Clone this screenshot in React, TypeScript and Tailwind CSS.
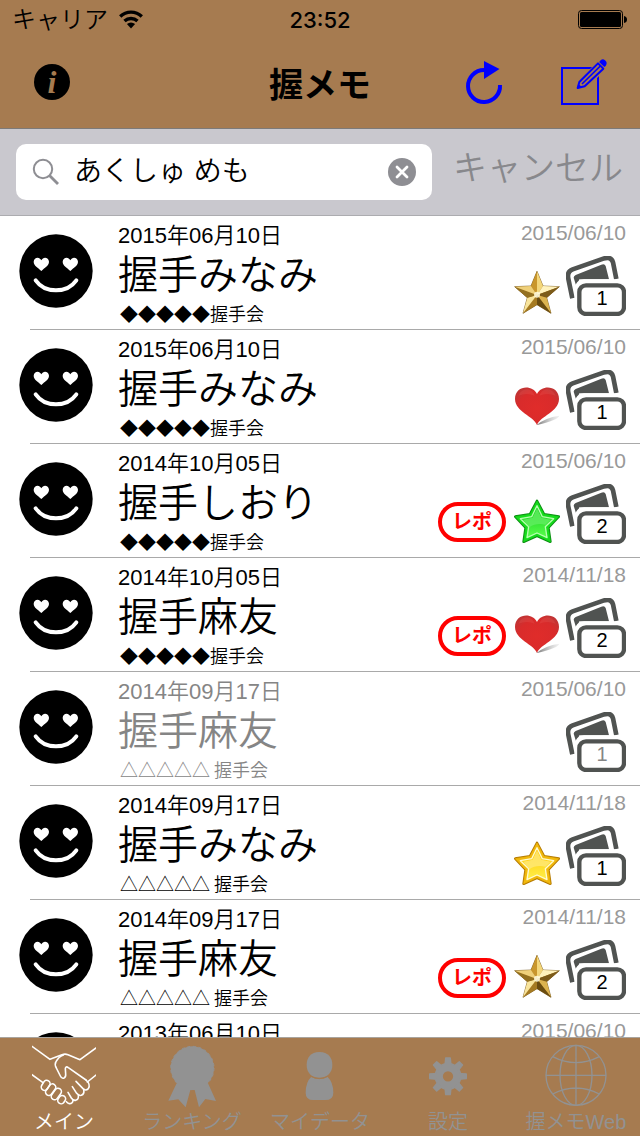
import React from 'react';

type Mark = 'gold' | 'heart' | 'green' | 'yellow';

interface Memo {
  date: string;
  name?: string;
  venue?: string;
  updated: string;
  count?: number;
  mark?: Mark;
  report?: boolean;
  muted?: boolean;
}

const memos: Memo[] = [
  { date: '2015年06月10日', name: '握手みなみ', venue: '◆◆◆◆◆握手会', updated: '2015/06/10', count: 1, mark: 'gold' },
  { date: '2015年06月10日', name: '握手みなみ', venue: '◆◆◆◆◆握手会', updated: '2015/06/10', count: 1, mark: 'heart' },
  { date: '2014年10月05日', name: '握手しおり', venue: '◆◆◆◆◆握手会', updated: '2015/06/10', count: 2, mark: 'green', report: true },
  { date: '2014年10月05日', name: '握手麻友', venue: '◆◆◆◆◆握手会', updated: '2014/11/18', count: 2, mark: 'heart', report: true },
  { date: '2014年09月17日', name: '握手麻友', venue: '△△△△△ 握手会', updated: '2015/06/10', count: 1, muted: true },
  { date: '2014年09月17日', name: '握手みなみ', venue: '△△△△△ 握手会', updated: '2014/11/18', count: 1, mark: 'yellow' },
  { date: '2014年09月17日', name: '握手麻友', venue: '△△△△△ 握手会', updated: '2014/11/18', count: 2, mark: 'gold', report: true },
  { date: '2013年06月10日', updated: '2015/06/10' },
];

/* ---------- Icons ---------- */

const WifiIcon = () => (
  <svg width="26" height="20" viewBox="0 0 26 20" fill="none" stroke="#000" strokeWidth="3.4" aria-hidden="true">
    <path d="M2.2 6.4A15.8 15.8 0 0 1 23.8 6.4M6.5 11A9.6 9.6 0 0 1 19.5 11" />
    <path d="M13 18.5 8.9 14.1A6 6 0 0 1 17.1 14.1Z" fill="#000" stroke="none" />
  </svg>
);

const BatteryIcon = () => (
  <svg width="50" height="20" viewBox="0 0 50 20" aria-hidden="true">
    <rect x="0.5" y="0.5" width="44" height="18" rx="3" fill="none" stroke="#000" />
    <rect x="2" y="2" width="41" height="15" rx="1.5" />
    <path d="M46 6q3 .5 3 3.5t-3 3.5z" />
  </svg>
);

const ReloadIcon = () => (
  <svg width="40" height="46" viewBox="464 59 40 46" aria-hidden="true">
    <path d="M484 70A16 16 0 1 0 500 85" fill="none" stroke="#00f" strokeWidth="4" />
    <path d="M484 61 499.500 69 484 79z" fill="#00f" />
  </svg>
);

const ComposeIcon = () => (
  <svg width="48" height="48" viewBox="723 174 144 144" fill="none" stroke="#00f" aria-hidden="true">
    <path d="M729 204H837V312H729z" strokeWidth="6" />
    <path d="M772 268 784 238 852 172 872 192 804 262z" fill="#a67b50" stroke="#a67b50" strokeWidth="4" />
    <path d="M776 264 781 246 837 190 853 206 797 259z" strokeWidth="6" strokeLinejoin="round" />
    <path d="M789 252 844 198" strokeWidth="5" />
    <path d="M774 266 778 251 789 262z" fill="#00f" stroke="none" />
    <path d="M842 184Q850 174 858 181 867 188 860 198L856 201 841 187z" fill="#00f" stroke="none" />
  </svg>
);

const FaceIcon = () => (
  <svg width="74" height="74" viewBox="57 52 222 222" className="shrink-0" aria-hidden="true">
    <circle cx="168" cy="163" r="110" />
    <path
      fill="#fff"
      d="M124 163C115 153 101 148 101 135 102 122 118 118 124 131 130 118 146 122 147 135 147 148 133 153 124 163zM211 163C202 153 188 148 188 135 189 122 205 118 211 131 217 118 233 122 234 135 234 148 220 153 211 163z"
    />
    <path d="M107 191Q128 221 168 221T229 191" fill="none" stroke="#fff" strokeWidth="12" strokeLinecap="round" />
  </svg>
);

const CardsIcon = () => (
  <svg width="60" height="60" viewBox="408 119 180 180" fill="none" aria-hidden="true">
    <path d="M427 246 415 187Q410 166 428 159L520 127Q543 119 549 138L559 188" stroke="#505351" strokeWidth="14" />
    <path d="M431 184Q431 179 437 176L514 145Q524 141 527 149L537 189H448L439 210z" fill="#505351" />
    <rect x="434" y="189" width="170" height="120" rx="28" fill="#fff" />
    <rect x="448" y="207" width="134" height="86" rx="20" fill="#fff" stroke="#505351" strokeWidth="13" />
  </svg>
);

const GoldStar = () => (
  <svg width="46" height="46" viewBox="252 163 138 138" aria-hidden="true">
    <path d="M321 167 339 211 388 213 350 246 363 293 321 267 279 293 292 246 254 213 303 211z" fill="#a8791f" stroke="#6b4c12" strokeWidth="2" />
    <path fill="#c9962c" d="M321 167 303 211 321 238z" />
    <path fill="#f3d67a" d="M321 167 339 211 321 238z" />
    <path fill="#fff2bd" d="M388 213 339 211 321 238z" />
    <path fill="#7c5b1a" d="M388 213 350 246 321 238z" />
    <path fill="#dcb350" d="M363 293 350 246 321 238z" />
    <path fill="#6a4c10" d="M363 293 321 267 321 238z" />
    <path fill="#a67b22" d="M279 293 321 267 321 238z" />
    <path fill="#f8e49c" d="M279 293 292 246 321 238z" />
    <path fill="#94701f" d="M254 213 292 246 321 238z" />
    <path fill="#efd07a" d="M254 213 303 211 321 238z" />
    <circle cx="321" cy="237" r="9" fill="#fffbe0" opacity=".85" />
  </svg>
);

const glossyTones = {
  green: { edge: '#0b8f12', ring: '#16dc1c', light: '#b8ffb0', from: '#0fc81a', to: '#59ff4c', gloss: '#62ee62' },
  yellow: { edge: '#b57a00', ring: '#f2b90c', light: '#fffbd0', from: '#ffc400', to: '#fff04a', gloss: '#ffe878' },
};

const starPath = 'M321 165 342 205 386 212 355 245 361 287 321 269 281 287 287 245 256 212 300 205z';

const GlossyStar = ({ tone }: { tone: 'green' | 'yellow' }) => {
  const c = glossyTones[tone];
  const id = `star-${tone}`;
  return (
    <svg width="46" height="46" viewBox="252 156 138 138" strokeLinejoin="round" aria-hidden="true">
      <defs>
        <linearGradient id={id} x1="0" y1="0" x2="0" y2="1">
          <stop offset="0" stopColor={c.from} />
          <stop offset="1" stopColor={c.to} />
        </linearGradient>
      </defs>
      <path d={starPath} fill={c.ring} stroke={c.edge} strokeWidth="8" />
      <path d={starPath} fill={c.ring} stroke={c.ring} strokeWidth="2" />
      <path d="M321 179 337 212 371 218 346 242 351 275 321 261 291 275 296 242 271 218 305 212z" fill={`url(#${id})`} stroke={c.light} strokeWidth="4" />
      <path d="M321 187 334 215 362 221 346 236Q318 230 298 244L280 221 308 215z" fill={c.gloss} opacity=".8" />
    </svg>
  );
};

const HeartIcon = () => (
  <svg width="46" height="46" viewBox="252 505 138 138" aria-hidden="true">
    <defs>
      <radialGradient id="heart" cx=".5" cy=".55" r=".6">
        <stop offset="0" stopColor="#e02c2a" />
        <stop offset=".7" stopColor="#d92b2b" />
        <stop offset="1" stopColor="#c23434" />
      </radialGradient>
      <linearGradient id="heart-shadow" x1="0" y1="0" x2="1" y2="0">
        <stop offset="0" stopColor="#777" />
        <stop offset="1" stopColor="#ddd" stopOpacity=".4" />
      </linearGradient>
    </defs>
    <path d="M320 628Q345 606 388 600 386 612 322 628z" fill="url(#heart-shadow)" />
    <path
      d="M321 628C310 600 256 590 255 550 255 508 308 506 321 535 334 506 387 508 387 550 386 590 332 600 321 628z"
      fill="url(#heart)"
    />
    <path d="M265 540Q275 520 293 521 308 524 314 540 290 530 265 540zM328 540Q334 524 350 521 367 520 377 540 352 530 328 540z" fill="#f06a66" opacity=".2" />
  </svg>
);

const MarkIcon = ({ mark }: { mark: Mark }) => {
  if (mark === 'gold') return <GoldStar />;
  if (mark === 'heart') return <HeartIcon />;
  return <GlossyStar tone={mark} />;
};

const SearchIcon = () => (
  <svg width="28" height="28" viewBox="0 0 28 28" fill="none" stroke="#8e8e93" aria-hidden="true">
    <circle cx="11" cy="11" r="9.200" strokeWidth="2" />
    <path d="M17.500 17.500 26 26" strokeWidth="2.800" />
  </svg>
);

const ClearIcon = () => (
  <svg width="28" height="28" viewBox="0 0 28 28" aria-hidden="true">
    <circle cx="14" cy="14" r="14" fill="#8e8e93" />
    <path d="M9 9 19 19M19 9 9 19" stroke="#fff" strokeWidth="2.800" strokeLinecap="round" />
  </svg>
);

const HandshakeIcon = () => (
  <svg width="64" height="64" viewBox="96 102 192 192" fill="none" stroke="#fff" strokeWidth="4.800" strokeLinecap="round" strokeLinejoin="round" aria-hidden="true">
    <path d="M96 109 150 148 186 134Q195 131 204 134L240 149 288 114" />
    <path d="M190 135Q176 140 168 155 163 163 169 174L181 198Q185 207 192 204 198 201 197 192L196 176Q197 167 205 173L258 210" />
    <path d="M96 194 128 217M288 195 262 216" />
    {/* right hand knuckles */}
    <path d="M258 210Q273 224 265 236 257 244 249 236L228 214" />
    <path d="M251 238Q254 252 244 256 236 258 230 250L217 230" />
    <path d="M235 256Q237 268 227 271 219 272 214 264L204 247" />
    <path d="M219 270Q219 281 208 281 202 280 199 275" />
    {/* left hand fingers */}
    <rect x="-10" y="-16" width="20" height="32" rx="10" transform="translate(137 226) rotate(32)" />
    <rect x="-10" y="-19" width="20" height="38" rx="10" transform="translate(152 239) rotate(36)" />
    <rect x="-10" y="-19" width="20" height="38" rx="10" transform="translate(169 252) rotate(36)" />
    <rect x="-10" y="-13" width="20" height="26" rx="10" transform="translate(185 269) rotate(36)" />
  </svg>
);

const RibbonIcon = () => (
  <svg width="64" height="64" viewBox="480 102 192 192" fill="#929292" aria-hidden="true">
    <circle cx="577" cy="174" r="65" />
    <circle cx="577" cy="174" r="65" fill="none" stroke="#929292" strokeWidth="3" strokeDasharray="9 8" />
    <path d="M530 220 505 272 535 268 557 292 571 240H584L597 292 616 267 648 273 624 220z" />
  </svg>
);

const PersonIcon = () => (
  <svg width="64" height="64" viewBox="864 102 192 192" fill="#929292" aria-hidden="true">
    <path d="M958 126C985 126 997 143 997 165 997 188 982 203 958 203 934 203 920 188 920 165 920 143 932 126 958 126z" />
    <path d="M934 200Q958 213 982 200 1000 216 1000 248 1000 270 976 270H940Q917 270 917 248 917 216 934 200z" />
    <path d="M930 198Q958 214 986 198" fill="none" stroke="#a67b50" strokeWidth="3" />
  </svg>
);

const GearIcon = () => (
  <svg width="64" height="64" viewBox="-96 -97 192 192" fill="#929292" aria-hidden="true">
    <circle r="28" fill="none" stroke="#929292" strokeWidth="25" />
    {[0, 45, 90, 135, 180, 225, 270, 315].map((deg) => (
      <path key={deg} d="M-11 -34 -9 -55Q-9 -57 -7 -57H7Q9 -57 9 -55L11 -34z" transform={`rotate(${deg})`} />
    ))}
  </svg>
);

const GlobeIcon = () => (
  <svg width="64" height="64" viewBox="-96 -94 192 192" fill="none" stroke="#929292" strokeWidth="4" aria-hidden="true">
    <circle r="90" />
    <ellipse rx="48" ry="90" />
    <path d="M-90 0H90M0 -90V90M-70 -56Q0 -20 70 -56M-70 56Q0 20 70 56" />
  </svg>
);

/* ---------- Sections ---------- */

const StatusBar = () => (
  <div className="grid h-10 grid-cols-3 items-center px-3">
    <div className="flex items-center gap-2.5">
      <span className="text-[24px] leading-6 font-[350]">キャリア</span>
      <WifiIcon />
    </div>
    <span className="text-center font-['Inter'] text-[22px] leading-6 font-medium">23:52</span>
    <span className="flex justify-end">
      <BatteryIcon />
    </span>
  </div>
);

const NavBar = () => (
  <nav className="grid h-[88px] grid-cols-[1fr_auto_1fr] items-center px-8 pb-1">
    <div className="flex">
      <button
        type="button"
        aria-label="情報"
        className="ml-0.5 flex size-9 items-center justify-center rounded-full bg-black font-['Liberation_Serif'] text-[32px] leading-9 font-bold text-[#a67b50] italic"
      >
        i
      </button>
    </div>
    <h1 className="pt-1.5 text-[34px] leading-10 font-bold">握メモ</h1>
    <div className="flex items-center justify-end gap-14">
      <button type="button" aria-label="更新">
        <ReloadIcon />
      </button>
      <button type="button" aria-label="新規メモ">
        <ComposeIcon />
      </button>
    </div>
  </nav>
);

const SearchBar = () => (
  <div className="flex h-[87px] items-center border-b border-[#acacb0] bg-[#c9c8ce] pl-4">
    <label className="flex h-14 min-w-0 flex-1 items-center gap-3.5 rounded-[10px] bg-white px-4">
      <SearchIcon />
      <input
        type="text"
        aria-label="検索"
        defaultValue="あくしゅ めも"
        className="min-w-0 flex-1 bg-transparent text-[28px] leading-10 font-[350] outline-none"
      />
      <button type="button" aria-label="消去">
        <ClearIcon />
      </button>
    </label>
    <button type="button" className="px-[17px] pb-2 pl-[21px] text-[34px] leading-10 font-[350] text-[#88888c]">
      キャンセル
    </button>
  </div>
);

const MemoRow = ({ memo }: { memo: Memo }) => (
  <li>
    <div className={`flex h-[113px] pl-[19px] ${memo.muted ? 'text-[#858585]' : 'text-black'}`}>
      <div className="shrink-0 pt-[18px] text-black">
        <FaceIcon />
      </div>
      <div className="min-w-0 flex-1 pt-2 pl-[25px] whitespace-nowrap">
        <p className="text-[22px] leading-6 font-[350]">{memo.date}</p>
        {memo.name && <h2 className="mt-[3px] text-[40px] leading-[48px] font-[350]">{memo.name}</h2>}
        {memo.venue && (
          <p className="mt-0.5 pl-0.5 font-['Noto_Sans_CJK_JP',sans-serif] text-[18px] leading-6 font-[350]">{memo.venue}</p>
        )}
      </div>
      <div className="flex shrink-0 flex-col items-end pt-[5px] pr-[14px]">
        <time className="text-[21px] leading-6 text-[#999]">{memo.updated}</time>
        <div className="mt-[11px] flex items-end">
          {memo.report && (
            <span className="mr-2 mb-0.5 flex h-10 w-[68px] items-center justify-center rounded-full border-4 border-[#f00] text-[20px] leading-6 font-bold text-[#f00]">
              レポ
            </span>
          )}
          {memo.mark && <MarkIcon mark={memo.mark} />}
          {memo.count && (
            <span className="relative ml-1.5">
              <CardsIcon />
              <span className="absolute right-0 bottom-0 w-12 pb-1 text-center text-[20px] leading-7">{memo.count}</span>
            </span>
          )}
        </div>
      </div>
    </div>
    <div className="ml-[30px] border-b border-[#a9a9a9]" />
  </li>
);

const tabs = [
  { label: 'メイン', Icon: HandshakeIcon, active: true },
  { label: 'ランキング', Icon: RibbonIcon },
  { label: 'マイデータ', Icon: PersonIcon },
  { label: '設定', Icon: GearIcon },
  { label: '握メモWeb', Icon: GlobeIcon },
];

const TabBar = () => (
  <nav className="grid shrink-0 grid-cols-5 border-t border-[#a9a49e] bg-[#a67b50] pt-1.5">
    {tabs.map(({ label, Icon, active }) => (
      <a
        key={label}
        href="#"
        className={`flex flex-col items-center text-[20px] leading-7 font-[350] whitespace-nowrap ${active ? 'text-white' : 'text-[#929292]'}`}
      >
        <Icon />
        {label}
      </a>
    ))}
  </nav>
);

const App: React.FC = () => {
  return (
    <div className="flex h-screen flex-col overflow-hidden bg-white font-['Liberation_Sans','Noto_Sans_CJK_JP',sans-serif] text-black">
      <header className="shrink-0">
        <div className="border-b border-[#7d7a78] bg-[#a67b50]">
          <StatusBar />
          <NavBar />
        </div>
        <SearchBar />
      </header>
      <main className="min-h-0 flex-1 overflow-hidden">
        <ul>
          {memos.map((memo, i) => (
            <MemoRow key={i} memo={memo} />
          ))}
        </ul>
      </main>
      <TabBar />
    </div>
  );
};

export default App;
